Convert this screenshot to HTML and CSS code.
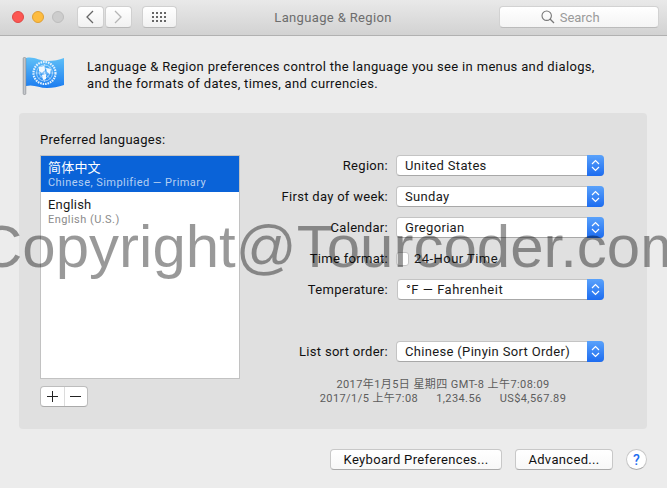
FILE: index.html
```html
<!DOCTYPE html>
<html lang="en">
<head>
    <meta charset="UTF-8">
    <title>Language &amp; Region</title>
    <link rel="stylesheet" href="styles.css">
</head>
<body>
    <header class="toolbar">
        <div class="lights">
            <span class="light red"></span>
            <span class="light yellow"></span>
            <span class="light gray"></span>
        </div>
        <div class="nav-group">
            <button class="tool-btn nav-btn">
                <svg width="10" height="16" viewBox="0 0 10 16"><path d="M8 2 L2 8 L8 14" fill="none" stroke="#666" stroke-width="1.3"/></svg>
            </button>
            <button class="tool-btn nav-btn">
                <svg width="10" height="16" viewBox="0 0 10 16"><path d="M2 2 L8 8 L2 14" fill="none" stroke="#b5b5b5" stroke-width="1.3"/></svg>
            </button>
        </div>
        <button class="tool-btn grid-btn">
            <svg width="14" height="10" viewBox="0 0 14 10" fill="#666">
                <rect x="0" y="0" width="2" height="2"/><rect x="4" y="0" width="2" height="2"/><rect x="8" y="0" width="2" height="2"/><rect x="12" y="0" width="2" height="2"/>
                <rect x="0" y="4" width="2" height="2"/><rect x="4" y="4" width="2" height="2"/><rect x="8" y="4" width="2" height="2"/><rect x="12" y="4" width="2" height="2"/>
                <rect x="0" y="8" width="2" height="2"/><rect x="4" y="8" width="2" height="2"/><rect x="8" y="8" width="2" height="2"/><rect x="12" y="8" width="2" height="2"/>
            </svg>
        </button>
        <div class="window-title">Language &amp; Region</div>
        <div class="search">
            <svg width="14" height="14" viewBox="0 0 14 14"><circle cx="5.7" cy="5.7" r="4.7" fill="none" stroke="#777" stroke-width="1.1"/><path d="M9 9 L13 13" stroke="#777" stroke-width="1.2"/></svg>
            <span>Search</span>
        </div>
    </header>

    <section class="intro">
        <svg class="flag" width="44" height="40" viewBox="0 0 44 40">
            <defs>
                <linearGradient id="flag-blue" x1="0" y1="0" x2="0" y2="1">
                    <stop offset="0" stop-color="#5fc0f8"/>
                    <stop offset="1" stop-color="#1b7cf0"/>
                </linearGradient>
            </defs>
            <path d="M4 1 C12 -1 17 4 25 4 C32 4 37 3 42 1 L42 28 C36 30 31 31 25 31 C17 31 12 27 4 29 Z" fill="url(#flag-blue)"/>
            <rect x="1.2" y="0.5" width="2.6" height="37" rx="1" fill="#c4c7cb" stroke="#7f8388" stroke-width="0.6"/>
            <g fill="none" stroke="#e4f1fd">
                <circle cx="22.5" cy="16" r="11" stroke-width="2.2" stroke-dasharray="1.6 0.9"/>
                <circle cx="22.5" cy="16" r="8" stroke-width="0.6"/>
                <circle cx="22.5" cy="16" r="5" stroke-width="0.6"/>
                <path d="M22.5 7 V25 M13.5 16 H31.5 M16 9.5 L29 22.5 M29 9.5 L16 22.5" stroke-width="0.5"/>
            </g>
            <g fill="#f2f8fe">
                <path d="M17 10 L22 9 L23 13 L20 16 L17 14 Z"/>
                <path d="M24 11 L29 12 L28 17 L25 15 Z"/>
                <path d="M20 18 L24 17 L24 22 L21 23 Z"/>
            </g>
        </svg>
        <p class="intro-text">Language &amp; Region preferences control the language you see in menus and dialogs,<br>and the formats of dates, times, and currencies.</p>
    </section>

    <section class="panel">
        <div class="lang-col">
            <div class="lang-title">Preferred languages:</div>
            <ul class="lang-list">
                <li class="lang-item selected">
                    <div class="lang-name">简体中文</div>
                    <div class="lang-sub">Chinese, Simplified — Primary</div>
                </li>
                <li class="lang-item">
                    <div class="lang-name">English</div>
                    <div class="lang-sub">English (U.S.)</div>
                </li>
            </ul>
            <div class="add-remove">
                <button class="ar-btn">
                    <svg width="13" height="13" viewBox="0 0 13 13"><path d="M6.5 1 V12 M1 6.5 H12" stroke="#222" stroke-width="1"/></svg>
                </button>
                <button class="ar-btn">
                    <svg width="13" height="13" viewBox="0 0 13 13"><path d="M1 6.5 H12" stroke="#222" stroke-width="1"/></svg>
                </button>
            </div>
        </div>

        <div class="form-col">
            <div class="form-row">
                <label>Region:</label>
                <div class="popup"><span>United States</span><span class="stepper"><svg width="9" height="13" viewBox="0 0 9 13"><path d="M1 5 L4.5 1.5 L8 5 M1 8 L4.5 11.5 L8 8" fill="none" stroke="#fff" stroke-width="1.2"/></svg></span></div>
            </div>
            <div class="form-row">
                <label>First day of week:</label>
                <div class="popup"><span>Sunday</span><span class="stepper"><svg width="9" height="13" viewBox="0 0 9 13"><path d="M1 5 L4.5 1.5 L8 5 M1 8 L4.5 11.5 L8 8" fill="none" stroke="#fff" stroke-width="1.2"/></svg></span></div>
            </div>
            <div class="form-row">
                <label>Calendar:</label>
                <div class="popup"><span>Gregorian</span><span class="stepper"><svg width="9" height="13" viewBox="0 0 9 13"><path d="M1 5 L4.5 1.5 L8 5 M1 8 L4.5 11.5 L8 8" fill="none" stroke="#fff" stroke-width="1.2"/></svg></span></div>
            </div>
            <div class="form-row">
                <label>Time format:</label>
                <div class="check-wrap"><span class="checkbox"></span><span>24-Hour Time</span></div>
            </div>
            <div class="form-row">
                <label>Temperature:</label>
                <div class="popup popup-temp"><span>°F — Fahrenheit</span><span class="stepper"><svg width="9" height="13" viewBox="0 0 9 13"><path d="M1 5 L4.5 1.5 L8 5 M1 8 L4.5 11.5 L8 8" fill="none" stroke="#fff" stroke-width="1.2"/></svg></span></div>
            </div>
            <div class="form-row sort-row">
                <label>List sort order:</label>
                <div class="popup"><span>Chinese (Pinyin Sort Order)</span><span class="stepper"><svg width="9" height="13" viewBox="0 0 9 13"><path d="M1 5 L4.5 1.5 L8 5 M1 8 L4.5 11.5 L8 8" fill="none" stroke="#fff" stroke-width="1.2"/></svg></span></div>
            </div>
            <div class="samples">
                <div>2017年1月5日 星期四 GMT-8 上午7:08:09</div>
                <div class="sample-line"><span>2017/1/5 上午7:08</span><span>1,234.56</span><span>US$4,567.89</span></div>
            </div>
        </div>
    </section>

    <footer class="actions">
        <button class="push-btn kbd-btn">Keyboard Preferences...</button>
        <button class="push-btn adv-btn">Advanced...</button>
        <button class="help-btn">?</button>
    </footer>

    <div class="watermark">Copyright@Tourcoder.com</div>
</body>
</html>
```

FILE: styles.css
```css
* {
    box-sizing: border-box;
}

html, body {
    height: 488px;
}

body {
    margin: 0;
    position: relative;
    overflow: hidden;
    background: #ececec;
    color: #1a1a1a;
    font-family: Roboto, "Noto Sans CJK SC", sans-serif;
    font-size: 13px;
}

button {
    font-family: inherit;
    padding: 0;
}

/* toolbar */
.toolbar {
    display: flex;
    align-items: center;
    height: 36px;
    padding: 0 8px 1px 12px;
    background: linear-gradient(#e9e9e9, #d2d2d2);
    border-bottom: 1px solid #b1b1b1;
}

.lights {
    display: flex;
    gap: 8px;
    width: 65px;
}

.light {
    width: 12px;
    height: 12px;
    border-radius: 50%;
}

.light.red {
    background: #fc5753;
    border: 1px solid #df4744;
}

.light.yellow {
    background: #fdbc40;
    border: 1px solid #de9f34;
}

.light.gray {
    background: #cdcdcd;
    border: 1px solid #bdbdbd;
}

.tool-btn {
    display: flex;
    align-items: center;
    justify-content: center;
    height: 22px;
    background: linear-gradient(#fff, #f1f1f1);
    border: 1px solid #d0d0d0;
    border-bottom-color: #b8b8b8;
    border-radius: 4px;
}

.nav-group {
    display: flex;
    gap: 1px;
}

.nav-btn {
    width: 27px;
}

.grid-btn {
    width: 35px;
    margin-left: 10px;
}

.window-title {
    width: 313px;
    margin-right: 10px;
    text-align: center;
    color: #6d6d6d;
    font-size: 13px;
    letter-spacing: 0.35px;
}

.search {
    display: flex;
    align-items: center;
    justify-content: center;
    gap: 5px;
    width: 160px;
    height: 22px;
    padding-right: 18px;
    background: linear-gradient(#fff, #f4f4f4);
    border: 1px solid #d2d2d2;
    border-bottom-color: #bbb;
    border-radius: 4px;
    color: #9a9a9a;
    font-size: 13px;
}

/* intro */
.intro {
    display: flex;
    height: 77px;
    padding: 21px 0 0 22px;
}

.flag {
    flex: none;
}

.intro-text {
    margin: 1px 0 0 21px;
    line-height: 17px;
    white-space: nowrap;
    letter-spacing: 0.33px;
    color: #111;
}

/* main panel */
.panel {
    display: flex;
    width: 628px;
    height: 316px;
    margin-left: 19px;
    padding: 18px 0 0 21px;
    background: #e0e0e0;
    border-radius: 4px;
}

.lang-col {
    width: 200px;
}

.lang-title {
    height: 24px;
    line-height: 17px;
    letter-spacing: 0.28px;
    color: #111;
}

.lang-list {
    list-style: none;
    height: 224px;
    margin: 0;
    padding: 0;
    background: #fff;
    border: 1px solid #c2c2c2;
}

.lang-item {
    height: 36px;
    padding: 3px 7px 0;
}

.lang-item + .lang-item {
    margin-top: 1px;
}

.lang-item.selected {
    background: #0a63d8;
    color: #fff;
}

.lang-name {
    height: 18px;
    font-size: 13px;
    line-height: 18px;
    letter-spacing: 0.2px;
}

.lang-sub {
    font-size: 11px;
    line-height: 12px;
    letter-spacing: 0.45px;
    color: #8b8b8b;
}

.selected .lang-sub {
    color: #b5cff2;
}

.add-remove {
    display: flex;
    width: 48px;
    height: 21px;
    margin-top: 7px;
    background: #fff;
    border: 1px solid #bdbdbd;
    border-bottom-color: #aaa;
    border-radius: 4px;
}

.ar-btn {
    display: flex;
    align-items: center;
    justify-content: center;
    flex: 1;
    background: none;
    border: none;
}

.ar-btn + .ar-btn {
    border-left: 1px solid #dcdcdc;
}

/* form on the right */
.form-col {
    padding: 24px 0 0 0;
}

.form-row {
    display: flex;
    align-items: center;
    gap: 8px;
    height: 21px;
    margin-bottom: 10px;
}

.form-row label {
    width: 148px;
    text-align: right;
    white-space: nowrap;
    letter-spacing: 0.3px;
    color: #111;
}

.sort-row {
    margin-top: 41px;
    margin-bottom: 0;
}

.popup {
    display: flex;
    align-items: center;
    justify-content: space-between;
    width: 208px;
    height: 21px;
    padding-left: 8px;
    background: #fff;
    border: 1px solid #c4c4c4;
    border-bottom-color: #a8a8a8;
    border-radius: 4px;
    letter-spacing: 0.33px;
    white-space: nowrap;
}

.popup-temp {
    width: 207px;
    margin-left: 1px;
    letter-spacing: 0.5px;
}

.stepper {
    display: flex;
    align-items: center;
    justify-content: center;
    width: 17px;
    height: 21px;
    margin-right: -1px;
    background: linear-gradient(#5aa2fb, #1d6cf0);
    border-radius: 0 4px 4px 0;
}

.check-wrap {
    display: flex;
    align-items: center;
    gap: 5px;
    letter-spacing: 0.45px;
}

.checkbox {
    width: 13px;
    height: 14px;
    background: #fff;
    border: 1px solid #c4c4c4;
    border-radius: 3px;
}

.samples {
    width: 280px;
    margin: 16px 0 0 63px;
    text-align: center;
    font-size: 11px;
    line-height: 14px;
    white-space: nowrap;
    color: #5c5c5c;
    letter-spacing: 0.42px;
}

.sample-line {
    display: flex;
    justify-content: center;
    gap: 18px;
}

/* bottom buttons */
.actions {
    display: flex;
    align-items: center;
    height: 23px;
    margin-top: 19px;
    padding-left: 330px;
}

.push-btn {
    height: 21px;
    background: linear-gradient(#fff, #f8f8f8);
    border: 1px solid #c8c8c8;
    border-bottom-color: #aaa;
    border-radius: 4px;
    color: #111;
    font-size: 13px;
    letter-spacing: 0.33px;
}

.kbd-btn {
    width: 172px;
}

.adv-btn {
    width: 98px;
    margin-left: 13px;
}

.help-btn {
    width: 21px;
    height: 21px;
    margin-left: 13px;
    background: #fff;
    border: 1px solid #c8c8c8;
    border-bottom-color: #aaa;
    border-radius: 50%;
    color: #1d6cf0;
    font-size: 14px;
    font-weight: 500;
}

/* sits over everything */
.watermark {
    position: absolute;
    left: -21px;
    top: 212px;
    font-family: "Liberation Sans", sans-serif;
    font-size: 60px;
    line-height: 69px;
    white-space: nowrap;
    color: rgba(0, 0, 0, 0.4);
}
```
